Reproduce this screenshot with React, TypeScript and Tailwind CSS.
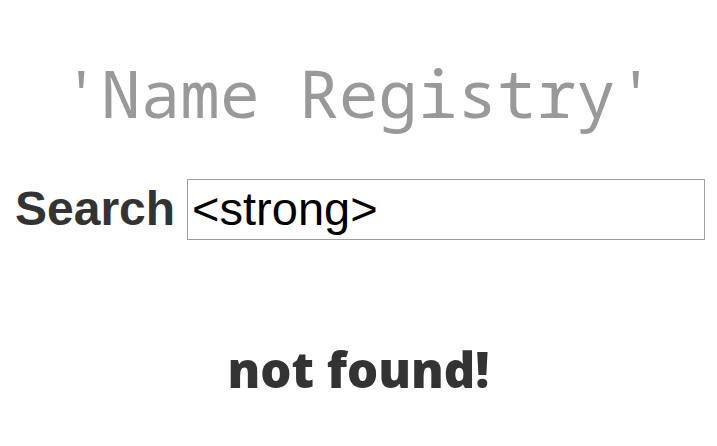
export default function App() {
  return (
    <div className="w-[717px] h-[446px] bg-white overflow-hidden">
      {/* Title */}
      <h1 className="pt-[52px] text-center text-[66px] leading-[80px] text-[#999999] font-['Noto_Sans_Mono','DejaVu_Sans_Mono',monospace]">
        'Name Registry'
      </h1>

      {/* Search row */}
      <div className="mt-[41px] flex items-center pl-[15px] pr-[12px] font-['Liberation_Sans',Arial,sans-serif]">
        <label className="mr-[12px] text-[48px] font-bold text-[#333333]">Search</label>
        <input
          defaultValue="<strong>"
          className="min-w-0 flex-1 h-[61px] border border-[#a0a0a0] px-[4px] text-[47px] text-black outline-none"
        />
      </div>

      {/* Result */}
      <p className="mt-[88px] text-center text-[49px] font-extrabold text-[#333333] font-['Open_Sans',sans-serif]">
        not found!
      </p>
    </div>
  );
}
